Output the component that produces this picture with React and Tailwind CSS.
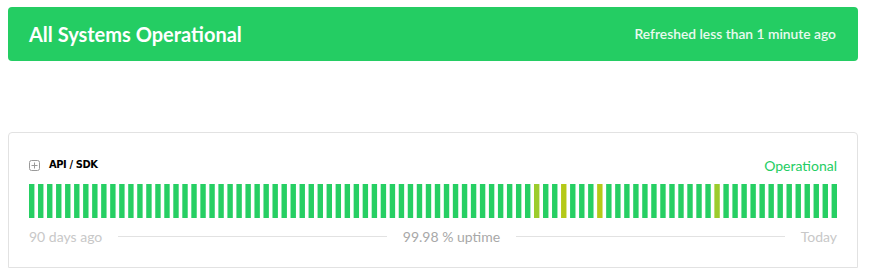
import React from "react";

const yellowish = { 56: "#9ccc2c", 59: "#b5c918", 63: "#b5c918", 76: "#9ccc2c" };

const UptimeBars = () => {
  const days = Array.from({ length: 90 }, (_, i) => i);
  return (
    <svg width="808" height="34" viewBox="0 0 448 34" preserveAspectRatio="none" className="block">
      {days.map((i) => (
        <rect key={i} x={i * 5} y="0" width="3" height="34" fill={yellowish[i] || "#26cf63"} />
      ))}
    </svg>
  );
};

const PlusBox = () => (
  <svg width="11" height="11" viewBox="0 0 11 11" className="block">
    <rect x="0.5" y="0.5" width="10" height="10" rx="2" fill="none" stroke="#9a9a9a" />
    <path d="M5.5 2.5v6M2.5 5.5h6" stroke="#9a9a9a" strokeWidth="1" />
  </svg>
);

const App = () => {
  return (
    <div className="min-h-[272px] bg-white pl-2 pt-[7px]" style={{ fontFamily: "Lato, 'Liberation Sans', sans-serif" }}>
      <div className="w-[850px] h-[54px] rounded-[4px] bg-[#24cd63] flex items-center justify-between pl-[21px] pr-[22px]">
        <span className="text-white font-bold text-[20px]">All Systems Operational</span>
        <span className="text-white/90 font-semibold text-[13.8px]">Refreshed less than 1 minute ago</span>
      </div>

      <div className="mt-[71px] w-[850px] border border-[#e2e2e2] rounded-t-[4px] px-5 pt-[22px] pb-[21px]">
        <div className="flex items-center justify-between h-5">
          <div className="flex items-center gap-[9px]">
            <PlusBox />
            <span
              className="text-[11px] font-bold text-black tracking-[-0.4px]"
              style={{ fontFamily: "'DejaVu Sans Condensed', 'DejaVu Sans', sans-serif" }}
            >
              API / SDK
            </span>
          </div>
          <span className="text-[14px] text-[#24cd63]">Operational</span>
        </div>
        <div className="mt-[9px]">
          <UptimeBars />
        </div>
        <div className="mt-2 flex items-center h-5 text-[14px] text-[#c8c8c8]">
          <span>90 days ago</span>
          <div className="flex-1 h-px bg-[#e2e2e2] mx-4" />
          <span className="text-[#a8a8a8]">99.98 % uptime</span>
          <div className="flex-1 h-px bg-[#e2e2e2] mx-4" />
          <span>Today</span>
        </div>
      </div>
    </div>
  );
};

export default App;
